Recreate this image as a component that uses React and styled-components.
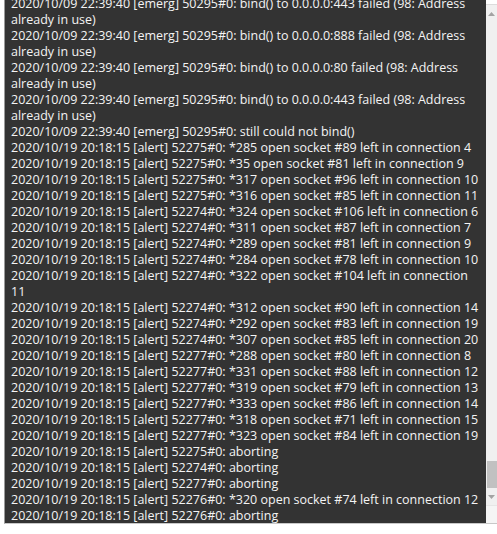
import styled, { createGlobalStyle } from "styled-components";

const GlobalStyle = createGlobalStyle`
  html, body {
    margin: 0;
    padding: 0;
    background: #ffffff;
    overflow: hidden;
  }
`;

// each entry is one log record; "wrap" is the part that falls to the next row
const entries = [
  { text: "2020/10/09 22:39:40 [emerg] 50295#0: bind() to 0.0.0.0:443 failed (98: Address", wrap: "already in use)" },
  { text: "2020/10/09 22:39:40 [emerg] 50295#0: bind() to 0.0.0.0:888 failed (98: Address", wrap: "already in use)" },
  { text: "2020/10/09 22:39:40 [emerg] 50295#0: bind() to 0.0.0.0:80 failed (98: Address", wrap: "already in use)" },
  { text: "2020/10/09 22:39:40 [emerg] 50295#0: bind() to 0.0.0.0:443 failed (98: Address", wrap: "already in use)" },
  { text: "2020/10/09 22:39:40 [emerg] 50295#0: still could not bind()" },
  { text: "2020/10/19 20:18:15 [alert] 52275#0: *285 open socket #89 left in connection 4" },
  { text: "2020/10/19 20:18:15 [alert] 52275#0: *35 open socket #81 left in connection 9" },
  { text: "2020/10/19 20:18:15 [alert] 52275#0: *317 open socket #96 left in connection 10" },
  { text: "2020/10/19 20:18:15 [alert] 52275#0: *316 open socket #85 left in connection 11" },
  { text: "2020/10/19 20:18:15 [alert] 52274#0: *324 open socket #106 left in connection 6" },
  { text: "2020/10/19 20:18:15 [alert] 52274#0: *311 open socket #87 left in connection 7" },
  { text: "2020/10/19 20:18:15 [alert] 52274#0: *289 open socket #81 left in connection 9" },
  { text: "2020/10/19 20:18:15 [alert] 52274#0: *284 open socket #78 left in connection 10" },
  { text: "2020/10/19 20:18:15 [alert] 52274#0: *322 open socket #104 left in connection", wrap: "11" },
  { text: "2020/10/19 20:18:15 [alert] 52274#0: *312 open socket #90 left in connection 14" },
  { text: "2020/10/19 20:18:15 [alert] 52274#0: *292 open socket #83 left in connection 19" },
  { text: "2020/10/19 20:18:15 [alert] 52274#0: *307 open socket #85 left in connection 20" },
  { text: "2020/10/19 20:18:15 [alert] 52277#0: *288 open socket #80 left in connection 8" },
  { text: "2020/10/19 20:18:15 [alert] 52277#0: *331 open socket #88 left in connection 12" },
  { text: "2020/10/19 20:18:15 [alert] 52277#0: *319 open socket #79 left in connection 13" },
  { text: "2020/10/19 20:18:15 [alert] 52277#0: *333 open socket #86 left in connection 14" },
  { text: "2020/10/19 20:18:15 [alert] 52277#0: *318 open socket #71 left in connection 15" },
  { text: "2020/10/19 20:18:15 [alert] 52277#0: *323 open socket #84 left in connection 19" },
  { text: "2020/10/19 20:18:15 [alert] 52275#0: aborting" },
  { text: "2020/10/19 20:18:15 [alert] 52274#0: aborting" },
  { text: "2020/10/19 20:18:15 [alert] 52277#0: aborting" },
  { text: "2020/10/19 20:18:15 [alert] 52276#0: *320 open socket #74 left in connection 12" },
  { text: "2020/10/19 20:18:15 [alert] 52276#0: aborting" },
];

const Page = styled.div`
  padding-left: 4px;
  height: 534px;
`;

const LogBox = styled.div`
  display: flex;
  height: 524px;
  width: 499px;
  box-sizing: border-box;
  border-left: 1px solid #9a9a9a;
  border-bottom: 1px solid #c8c8c8;
`;

const LogView = styled.div`
  flex: 1;
  min-width: 0;
  background: #333333;
  overflow: hidden;
  padding: 0 5px 0 6px;
`;

const LogText = styled.div`
  margin-top: -4px;
  color: #f4f4f4;
  font-family: "Open Sans", "Noto Sans CJK SC", sans-serif;
  font-size: 12.5px;
  line-height: 16px;
  white-space: nowrap;
`;

const Entry = styled.div``;

const ScrollBar = styled.div`
  width: 17px;
  flex-shrink: 0;
  display: flex;
  flex-direction: column;
  background: #ffffff;
`;

const ScrollInner = styled.div`
  flex: 1;
  margin-top: 4px;
  border-top: 1px solid #dcdcdc;
  background: #f0f0f0;
  display: flex;
  flex-direction: column;
`;

const Arrow = styled.div`
  height: 17px;
  display: flex;
  align-items: center;
  justify-content: center;
  padding-right: 6px;
`;

const Track = styled.div`
  flex: 1;
  display: flex;
  flex-direction: column;
  justify-content: flex-end;
`;

const Thumb = styled.div`
  height: 27px;
  margin-left: 1px;
  background: #c1c1c1;
`;

const Corner = styled.div`
  height: 17px;
  background: #f5f5f5;
  border-top: 1px solid #e6e6e6;
`;

function Triangle({ up }) {
  return (
    <svg width="7" height="4" viewBox="0 0 7 4">
      <path d={up ? "M0 4 L3.5 0 L7 4 Z" : "M0 0 L3.5 4 L7 0 Z"} fill="#a3a3a3" />
    </svg>
  );
}

export default function App() {
  return (
    <>
      <GlobalStyle />
      <Page>
        <LogBox>
          <LogView>
            <LogText>
              {entries.map((e, i) => (
                <Entry key={i}>
                  {e.text}
                  {e.wrap && (
                    <>
                      <br />
                      {e.wrap}
                    </>
                  )}
                </Entry>
              ))}
            </LogText>
          </LogView>
          <ScrollBar>
            <ScrollInner>
              <Arrow>
                <Triangle up />
              </Arrow>
              <Track>
                <Thumb />
              </Track>
              <Arrow>
                <Triangle />
              </Arrow>
              <Corner />
            </ScrollInner>
          </ScrollBar>
        </LogBox>
      </Page>
    </>
  );
}
